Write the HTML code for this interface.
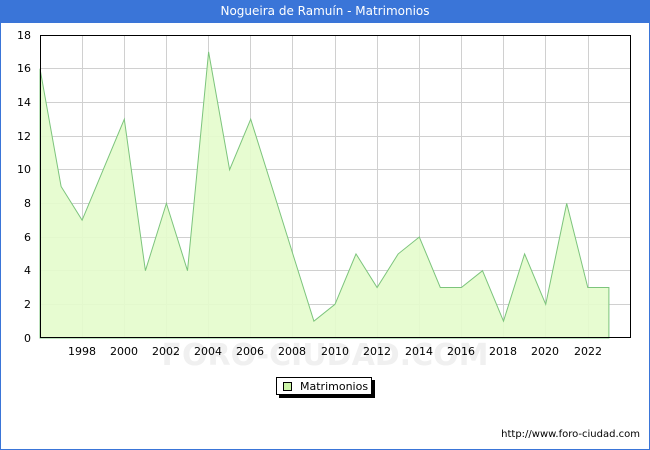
<!DOCTYPE html>
<html><head><style>
body{margin:0;width:650px;height:450px;overflow:hidden;background:#fff;font-family:"DejaVu Sans","Liberation Sans",sans-serif;}
.frame{position:absolute;left:0;top:0;width:648px;height:448px;border:1px solid #3a75d8;}
.title{position:absolute;left:0;top:0;width:650px;height:23px;background:#3a75d8;color:#fff;font-size:12px;text-align:center;line-height:23px;}
</style></head><body>
<div class="frame"></div>
<div class="title">Nogueira de Ramuín - Matrimonios</div>
<svg width="650" height="450" style="position:absolute;left:0;top:0" font-family="DejaVu Sans, Liberation Sans, sans-serif" font-size="11">
<g stroke="#d0d0d0" stroke-width="1">
<line x1="40" x2="630" y1="304.5" y2="304.5"/><line x1="40" x2="630" y1="270.5" y2="270.5"/>
<line x1="40" x2="630" y1="237.5" y2="237.5"/><line x1="40" x2="630" y1="203.5" y2="203.5"/>
<line x1="40" x2="630" y1="169.5" y2="169.5"/><line x1="40" x2="630" y1="136.5" y2="136.5"/>
<line x1="40" x2="630" y1="102.5" y2="102.5"/><line x1="40" x2="630" y1="68.5" y2="68.5"/>
<line x1="82.5" x2="82.5" y1="35" y2="338"/><line x1="124.5" x2="124.5" y1="35" y2="338"/>
<line x1="166.5" x2="166.5" y1="35" y2="338"/><line x1="208.5" x2="208.5" y1="35" y2="338"/>
<line x1="250.5" x2="250.5" y1="35" y2="338"/><line x1="292.5" x2="292.5" y1="35" y2="338"/>
<line x1="335.5" x2="335.5" y1="35" y2="338"/><line x1="377.5" x2="377.5" y1="35" y2="338"/>
<line x1="419.5" x2="419.5" y1="35" y2="338"/><line x1="461.5" x2="461.5" y1="35" y2="338"/>
<line x1="503.5" x2="503.5" y1="35" y2="338"/><line x1="545.5" x2="545.5" y1="35" y2="338"/>
<line x1="588.5" x2="588.5" y1="35" y2="338"/>
</g>
<text x="325" y="365" font-size="30" fill="#f0f0f0" text-anchor="middle" font-weight="bold">FORO-CIUDAD.COM</text>
<polygon fill="#e4fccc" fill-opacity="0.9" stroke="#7cc47c" stroke-width="1" points="40,338 40,68.7 61.1,186.5 82.1,220.2 103.2,169.7 124.3,119.2 145.4,270.7 166.4,203.4 187.5,270.7 208.6,51.9 229.6,169.7 250.7,119.2 271.8,186.5 292.8,253.9 313.9,321.2 335,304.3 356,253.9 377.1,287.5 398.2,253.9 419.3,237 440.3,287.5 461.4,287.5 482.5,270.7 503.5,321.2 524.6,253.9 545.7,304.3 566.7,203.4 587.8,287.5 608.9,287.5 608.9,338"/>
<rect x="40.5" y="35.5" width="590" height="302" fill="none" stroke="#000"/>
<g text-anchor="end">
<text x="31" y="342">0</text><text x="31" y="308">2</text><text x="31" y="274">4</text>
<text x="31" y="241">6</text><text x="31" y="207">8</text><text x="31" y="173">10</text>
<text x="31" y="140">12</text><text x="31" y="106">14</text><text x="31" y="72">16</text><text x="31" y="39">18</text>
</g>
<g text-anchor="middle">
<text x="82" y="355">1998</text><text x="124" y="355">2000</text><text x="166" y="355">2002</text>
<text x="208" y="355">2004</text><text x="250" y="355">2006</text><text x="292" y="355">2008</text>
<text x="335" y="355">2010</text><text x="377" y="355">2012</text><text x="419" y="355">2014</text>
<text x="461" y="355">2016</text><text x="503" y="355">2018</text><text x="545" y="355">2020</text>
<text x="588" y="355">2022</text>
</g>
<rect x="279" y="380" width="96" height="18" fill="#000"/>
<rect x="276.5" y="377.5" width="95" height="17" fill="#fff" stroke="#000"/>
<rect x="283.5" y="382.5" width="8" height="8" fill="#ccf5a8" stroke="#000"/>
<text x="300" y="390">Matrimonios</text>
<text x="640" y="437" text-anchor="end" font-size="10">http://www.foro-ciudad.com</text>
</svg>
</body></html>
